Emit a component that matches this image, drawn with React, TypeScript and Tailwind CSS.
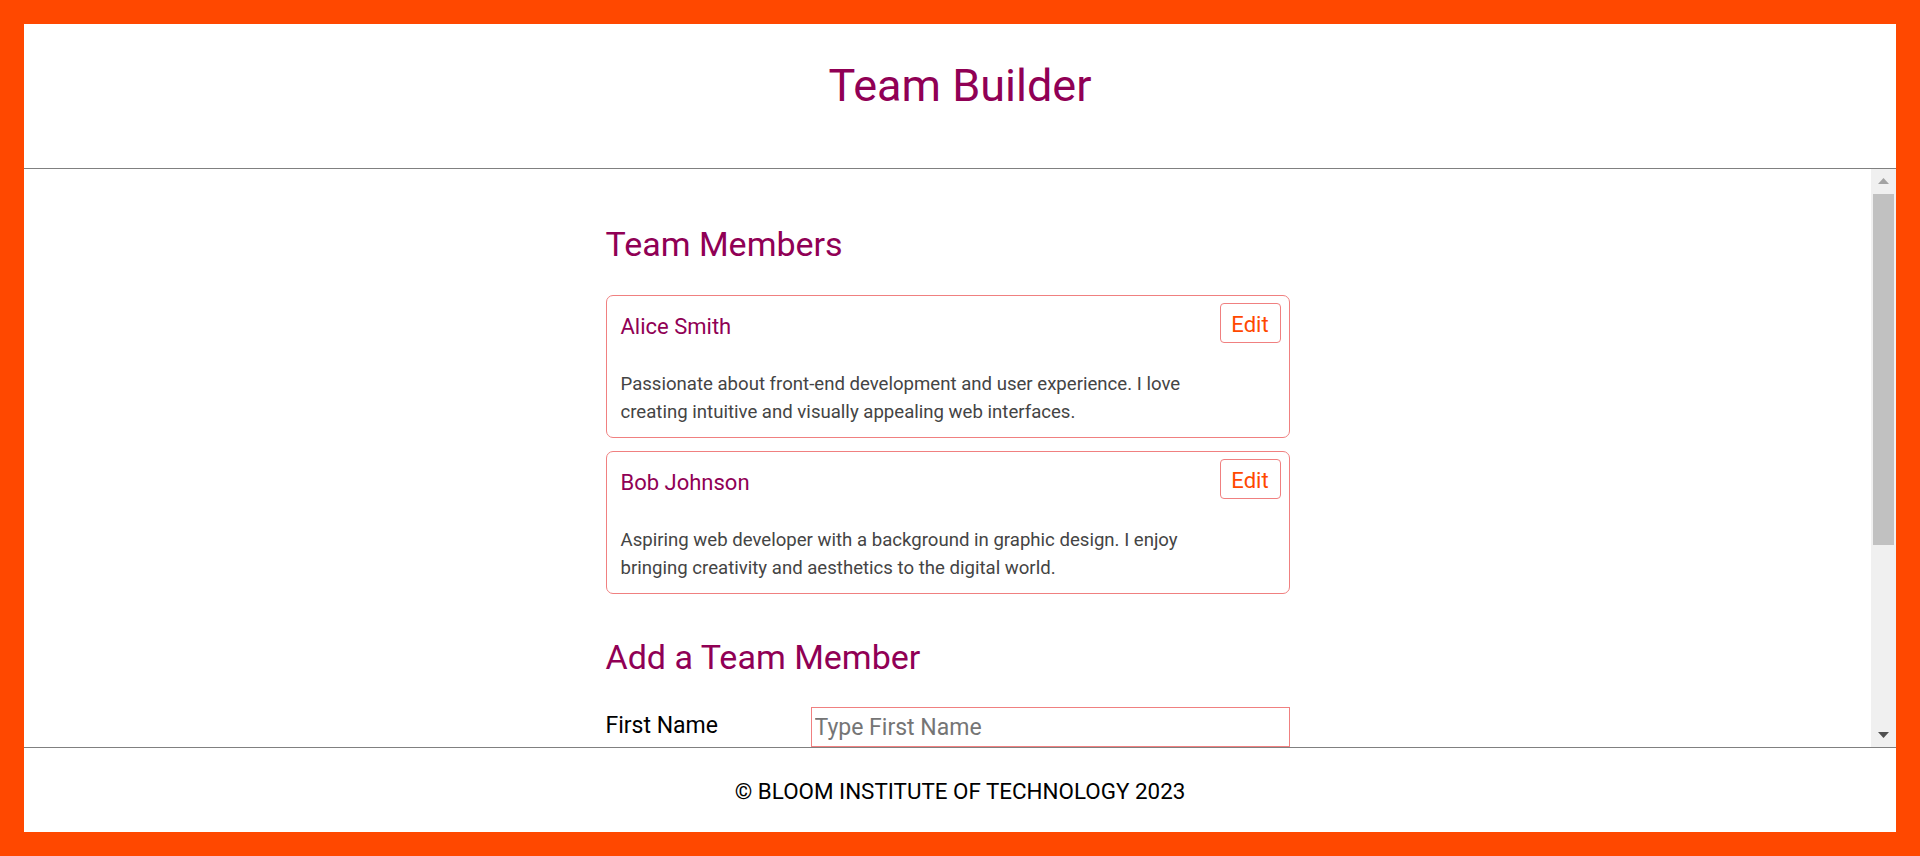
const members = [
  {
    name: "Alice Smith",
    bio: "Passionate about front-end development and user experience. I love creating intuitive and visually appealing web interfaces.",
  },
  {
    name: "Bob Johnson",
    bio: "Aspiring web developer with a background in graphic design. I enjoy bringing creativity and aesthetics to the digital world.",
  },
];

const MemberCard = ({ name, bio }: { name: string; bio: string }) => (
  <div className="border border-[#f08080] rounded-[7px] pl-[14px] pr-[8px] pt-[7px] pb-[11px]">
    <div className="flex items-start justify-between">
      <h3 className="mt-[13px] text-[22px] leading-none text-[#900055]">{name}</h3>
      <button className="w-[61px] h-[40px] pt-[10px] pb-[6px] border border-[#f08080] rounded-[4px] text-[22px] leading-none text-[#ff4800]">
        Edit
      </button>
    </div>
    <p className="mt-[27px] max-w-[590px] text-[18.6px] leading-[28px] text-[#444444]">{bio}</p>
  </div>
);

const Scrollbar = () => (
  <div className="flex flex-col w-[25px] bg-[#f0f0f0]">
    <div className="flex items-center justify-center h-[24px]">
      <svg width="11" height="6" viewBox="0 0 11 6">
        <polygon points="5.5,0 11,6 0,6" fill="#a3a3a3" />
      </svg>
    </div>
    <div className="flex-1 px-[2px] pt-[1px]">
      <div className="h-[351px] bg-[#c1c1c1]" />
    </div>
    <div className="flex items-center justify-center h-[24px]">
      <svg width="11" height="6" viewBox="0 0 11 6">
        <polygon points="0,0 11,0 5.5,6" fill="#505050" />
      </svg>
    </div>
  </div>
);

export default function App() {
  return (
    <div className="h-screen p-[24px] bg-[#ff4800] font-['Roboto',sans-serif]">
      <div className="flex flex-col h-full bg-white">
        <header className="h-[145px] shrink-0 pt-[39px] border-b border-[#808080] text-center">
          <h1 className="text-[45px] leading-none text-[#900055]">Team Builder</h1>
        </header>

        <div className="flex flex-1 min-h-0">
          <main className="flex-1 overflow-hidden">
            <div className="w-[684px] mx-auto pt-[58px]">
              <h2 className="text-[34px] leading-none text-[#900055] mb-[34px]">Team Members</h2>

              <div className="flex flex-col gap-[13px]">
                {members.map((m) => (
                  <MemberCard key={m.name} name={m.name} bio={m.bio} />
                ))}
              </div>

              <h2 className="mt-[46px] text-[34px] leading-none text-[#900055]">Add a Team Member</h2>

              <form className="flex items-start mt-[33px]">
                <label className="w-[205px] pt-[7px] text-[23px] leading-none text-black">First Name</label>
                <input
                  className="flex-1 h-[40px] px-[3px] border border-[#f08080] text-[23px] placeholder:text-[#757575] outline-none"
                  placeholder="Type First Name"
                />
              </form>

              <div className="h-[200px]" />
            </div>
          </main>
          <Scrollbar />
        </div>

        <footer className="flex items-center justify-center h-[85px] shrink-0 pt-[3px] border-t border-[#808080] text-[22.4px] text-black">
          © BLOOM INSTITUTE OF TECHNOLOGY 2023
        </footer>
      </div>
    </div>
  );
}
